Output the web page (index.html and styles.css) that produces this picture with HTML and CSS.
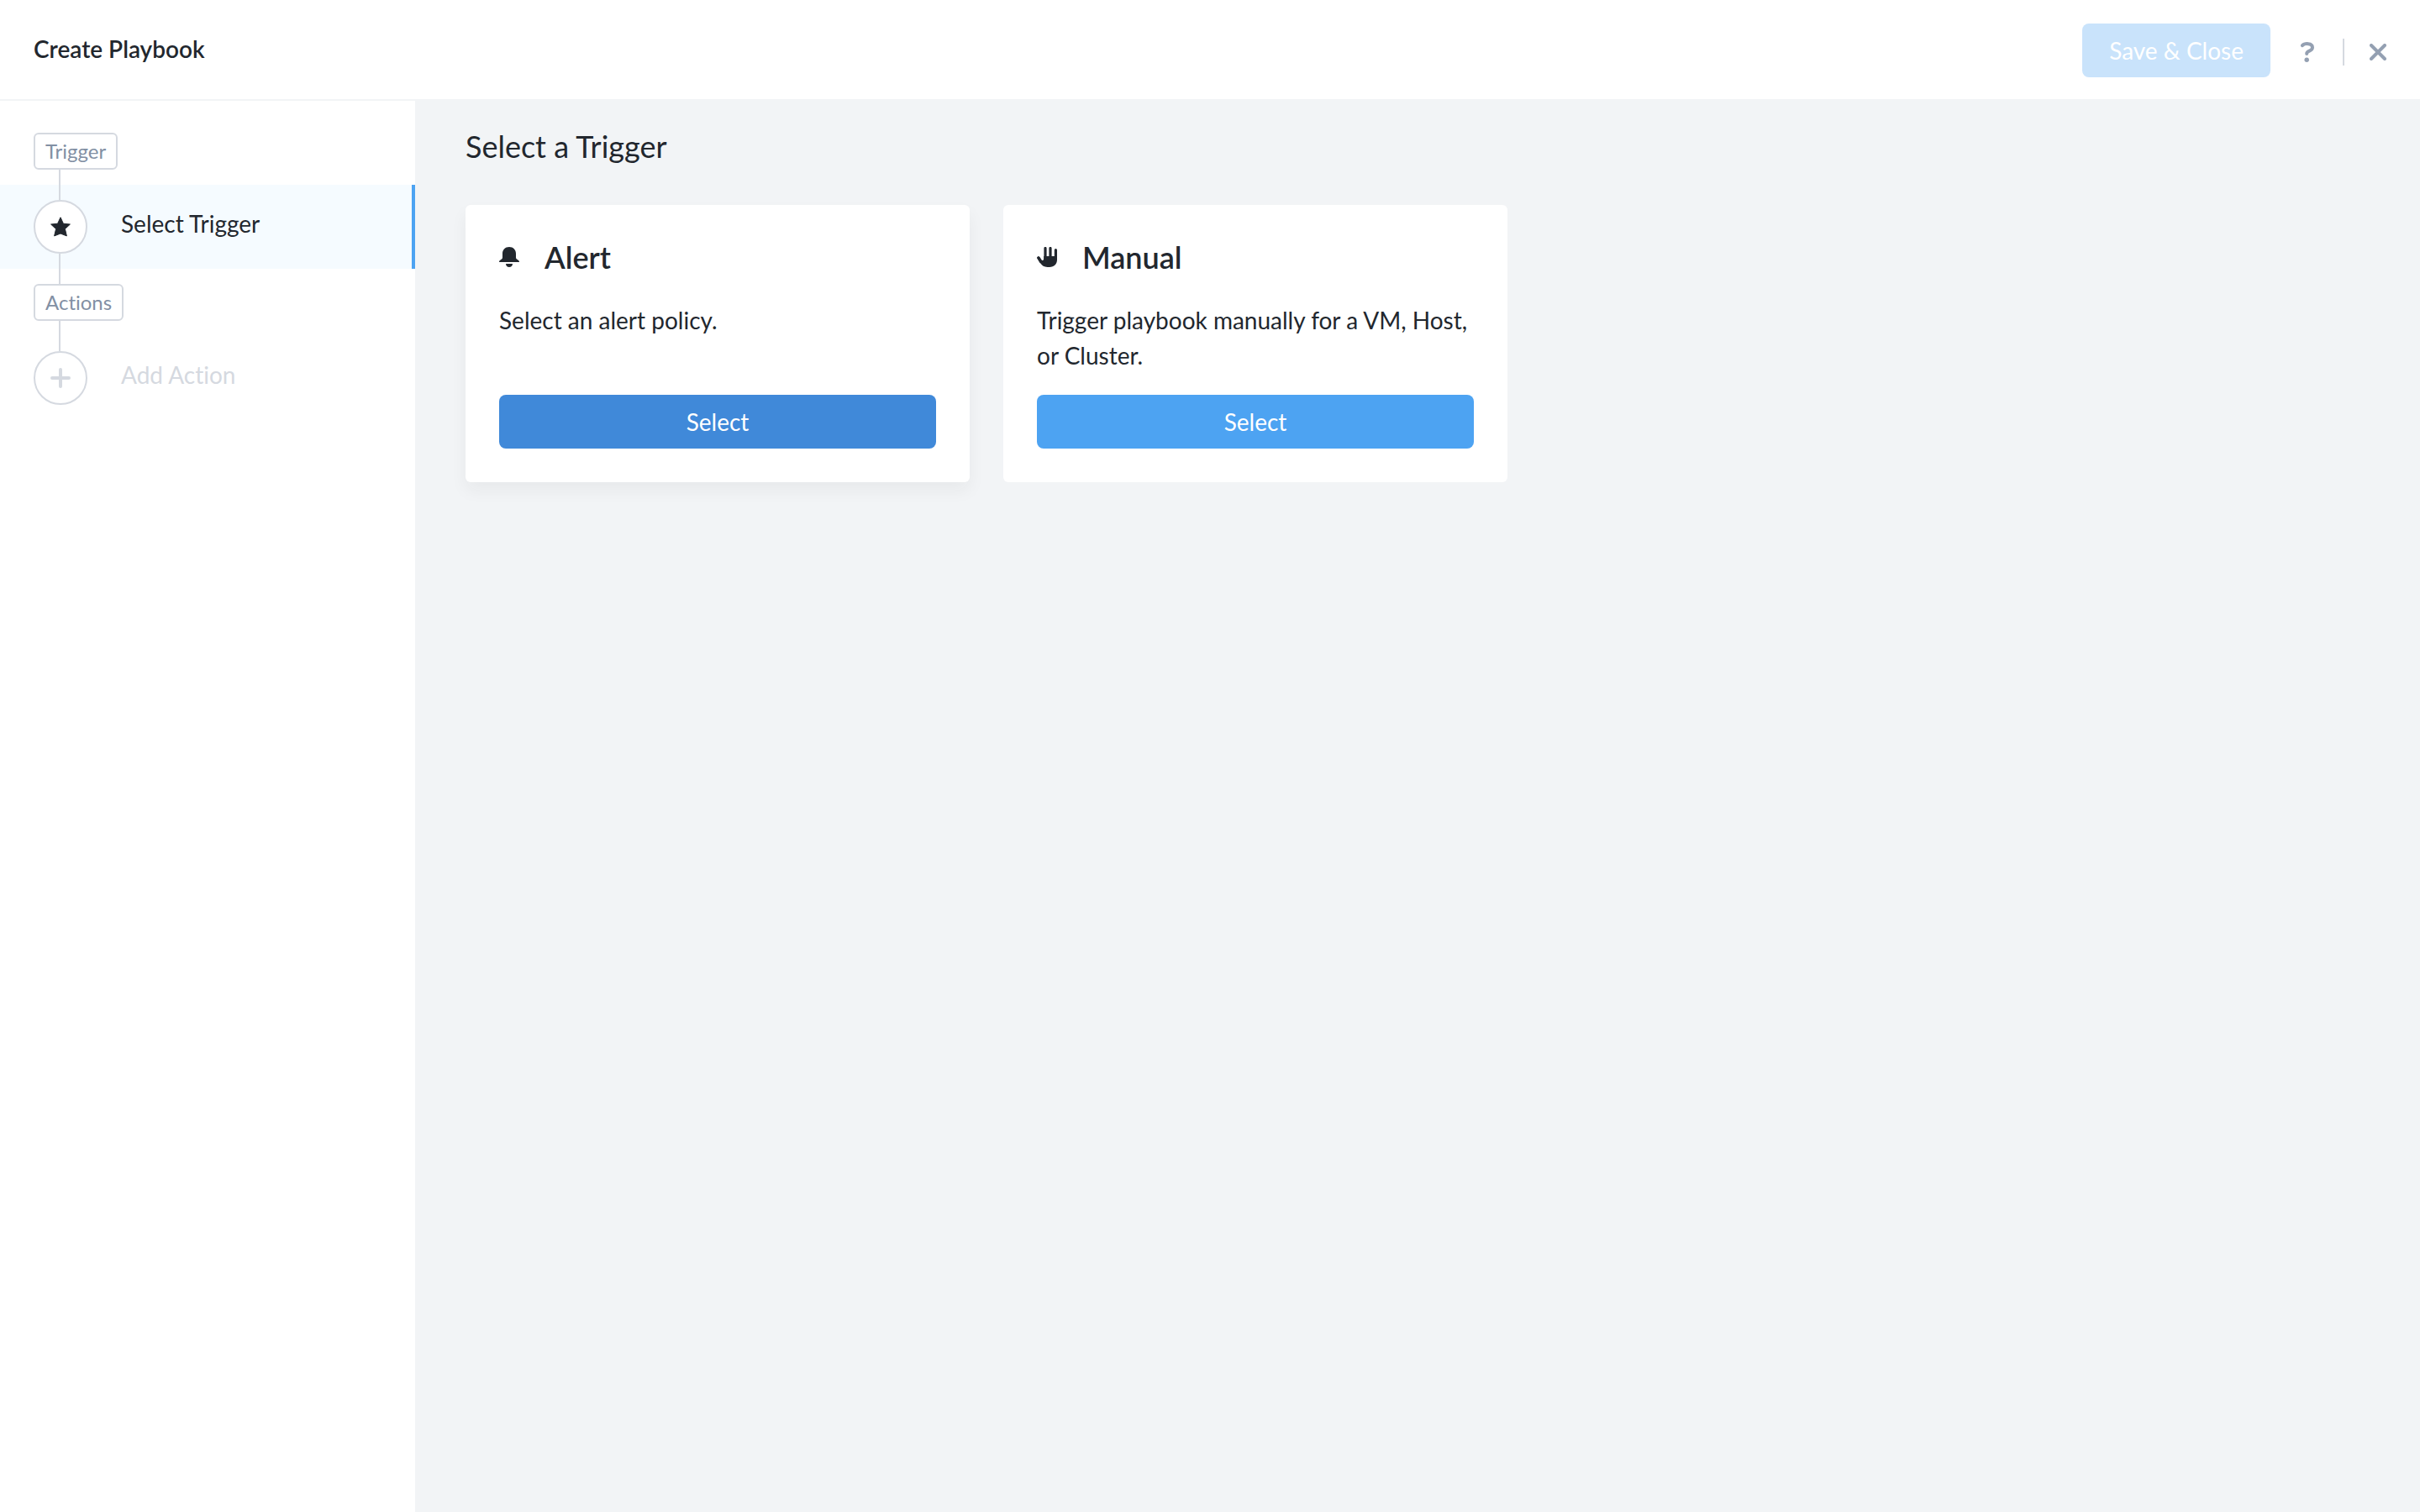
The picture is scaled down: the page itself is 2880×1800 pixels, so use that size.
FILE: index.html
```
<!DOCTYPE html>
<html lang="en">
<head>
    <meta charset="UTF-8">
    <meta name="viewport" content="width=device-width, initial-scale=1.0">
    <title>Create Playbook</title>
    <link rel="stylesheet" href="styles.css">
</head>
<body>
    <header class="header">
        <h1 class="header-title">Create Playbook</h1>
        <div class="header-actions">
            <button class="btn btn-save" type="button" disabled>Save &amp; Close</button>
            <div class="header-icons">
                <button class="icon-btn" type="button" aria-label="Help">
                    <svg width="24" height="24" viewBox="0 0 24 24" fill="none" stroke="currentColor" stroke-width="4" stroke-linecap="round" stroke-linejoin="round">
                        <path d="M6 4.2C8.5 1.4 18 .8 18 6.6C18 11.4 11.2 10 11.2 14"/>
                        <circle cx="11.2" cy="21.2" r="2.7" fill="currentColor" stroke="none"/>
                    </svg>
                </button>
                <span class="divider"></span>
                <button class="icon-btn" type="button" aria-label="Close">
                    <svg width="20" height="20" viewBox="0 0 20 20" fill="none" stroke="currentColor" stroke-width="4" stroke-linecap="round">
                        <path d="M2 2L18 18M18 2L2 18"/>
                    </svg>
                </button>
            </div>
        </div>
    </header>

    <div class="layout">
        <!-- Steps -->
        <nav class="sidebar">
            <div class="group">
                <span class="tag">Trigger</span>
                <span class="line"></span>
            </div>
            <a class="step active" href="#">
                <span class="step-marker">
                    <span class="line"></span>
                    <span class="circle">
                        <svg width="24" height="24" viewBox="0 0 24 24" fill="#22272e" stroke="#22272e" stroke-width="1" stroke-linejoin="round">
                            <path d="M12 .8L15.4 8.2L23.4 9L17.4 14.6L19.4 22.9L12 20L4.6 22.9L6.6 14.6L.6 9L8.6 8.2Z"/>
                        </svg>
                    </span>
                    <span class="line"></span>
                </span>
                <span class="step-name">Select Trigger</span>
            </a>
            <div class="group">
                <span class="line"></span>
                <span class="tag">Actions</span>
                <span class="line"></span>
            </div>
            <a class="step disabled" href="#">
                <span class="step-marker">
                    <span class="line"></span>
                    <span class="circle">
                        <svg width="24" height="24" viewBox="0 0 24 24" fill="none" stroke="#d5d9e0" stroke-width="4" stroke-linecap="round">
                            <path d="M12 2V22M2 12H22"/>
                        </svg>
                    </span>
                    <span class="line hidden"></span>
                </span>
                <span class="step-name">Add Action</span>
            </a>
        </nav>

        <!-- Trigger list -->
        <main class="content">
            <h2 class="content-title">Select a Trigger</h2>
            <div class="cards">
                <section class="card hovered">
                    <h3 class="card-title">
                        <svg width="24" height="24" viewBox="0 0 24 24" fill="currentColor">
                            <path d="M12 0C7.2 0 4 3.4 4 8V12.5C4 14 3 14.6 1.6 15.4C.6 16 0 16.6 0 18H24C24 16.6 23.4 16 22.4 15.4C21 14.6 20 14 20 12.5V8C20 3.4 16.8 0 12 0Z"/>
                            <path d="M8 20H16C16 22.4 14.2 24 12 24C9.8 24 8 22.4 8 20Z"/>
                        </svg>
                        Alert
                    </h3>
                    <p class="card-text">Select an alert policy.</p>
                    <button class="btn" type="button">Select</button>
                </section>
                <section class="card">
                    <h3 class="card-title">
                        <svg width="24" height="24" viewBox="0 0 24 24" fill="none" stroke="currentColor" stroke-linecap="round" stroke-linejoin="round">
                            <path d="M1.8 13L4.6 17.6M10 1.5V14M16 1.5V14M22.4 3.5V14" stroke-width="3.2"/>
                            <path d="M.4 13.4C0 11 2.4 10.4 3.6 12.2L6 16C7 16.4 8 15.6 8.2 14V11H24V15C24 20.5 20.5 24 15 24H12.5C8.5 24 6 22.4 4.4 19.6Z" fill="currentColor" stroke="none"/>
                        </svg>
                        Manual
                    </h3>
                    <p class="card-text">Trigger playbook manually for a VM, Host, or Cluster.</p>
                    <button class="btn" type="button">Select</button>
                </section>
            </div>
        </main>
    </div>
</body>
</html>
```
FILE: styles.css
```
* {
    box-sizing: border-box;
}

body {
    font-family: Lato, sans-serif;
    font-size: 28px;
    line-height: 42px;
    font-variant-ligatures: none;
    color: #22272e;
    background-color: #f2f4f6;
    margin: 0;
    min-height: 100vh;
    display: flex;
    flex-direction: column;
}

h1, h2, h3, p {
    margin: 0;
}

.header {
    display: flex;
    justify-content: space-between;
    align-items: center;
    padding: 28px 40px 26px;
    background-color: white;
    border-bottom: 2px solid #f2f4f6;
}

.header-title {
    font-size: 28px;
    font-weight: 600;
    padding-bottom: 4px;
}

.header-actions {
    display: flex;
    align-items: center;
    gap: 32px;
}

.header-icons {
    display: flex;
    align-items: center;
    gap: 30px;
    padding-top: 4px;
}

.btn {
    font-family: inherit;
    font-size: 28px;
    height: 64px;
    padding: 0 32px;
    border: none;
    border-radius: 8px;
    background-color: #4da3f2;
    color: white;
    cursor: pointer;
}

.btn-save {
    background-color: #c9e3fb;
    cursor: default;
}

.icon-btn {
    display: flex;
    padding: 0;
    border: none;
    background: none;
    color: #94a0b2;
    cursor: pointer;
}

.divider {
    width: 2px;
    height: 32px;
    background-color: #d5d9e0;
}

.layout {
    flex: 1;
    display: flex;
}

/* Steps */
.sidebar {
    width: 494px;
    flex-shrink: 0;
    padding-top: 38px;
    background-color: white;
}

.group {
    display: flex;
    flex-direction: column;
    align-items: flex-start;
    padding-left: 40px;
}

.tag {
    padding: 0 12px;
    border: 2px solid #d5d9e0;
    border-radius: 6px;
    font-size: 24px;
    line-height: 40px;
    color: #8290a4;
}

.line {
    width: 2px;
    height: 18px;
    margin-left: 30px;
    background-color: #d5d9e0;
}

.line.hidden {
    visibility: hidden;
}

.step {
    display: flex;
    align-items: center;
    gap: 40px;
    padding-left: 40px;
    color: inherit;
    text-decoration: none;
}

.step.active {
    background-color: #f5fbff;
    border-right: 4px solid #4da3f2;
}

.step.disabled {
    color: #d5d9e0;
}

.step-marker {
    display: flex;
    flex-direction: column;
}

.circle {
    display: flex;
    justify-content: center;
    align-items: center;
    width: 64px;
    height: 64px;
    border: 2px solid #d5d9e0;
    border-radius: 50%;
    background-color: white;
}

.step-name {
    padding-bottom: 8px;
}

/* Trigger list */
.content {
    flex: 1;
    padding: 32px 60px;
}

.content-title {
    font-size: 36px;
    font-weight: 400;
    line-height: 44px;
    margin-bottom: 48px;
}

.cards {
    display: flex;
    gap: 40px;
}

.card {
    display: flex;
    flex-direction: column;
    flex: 0 1 600px;
    padding: 40px;
    border-radius: 6px;
    background-color: white;
}

.card.hovered {
    box-shadow: 0 10px 20px rgba(34, 39, 46, 0.05);
}

.card.hovered .btn {
    background-color: #4089d9;
}

.card-title {
    display: flex;
    align-items: center;
    gap: 30px;
    font-size: 36px;
    font-weight: 600;
    line-height: 44px;
    margin-bottom: 32px;
}

.card-text {
    flex: 1;
    margin-bottom: 26px;
}
```
